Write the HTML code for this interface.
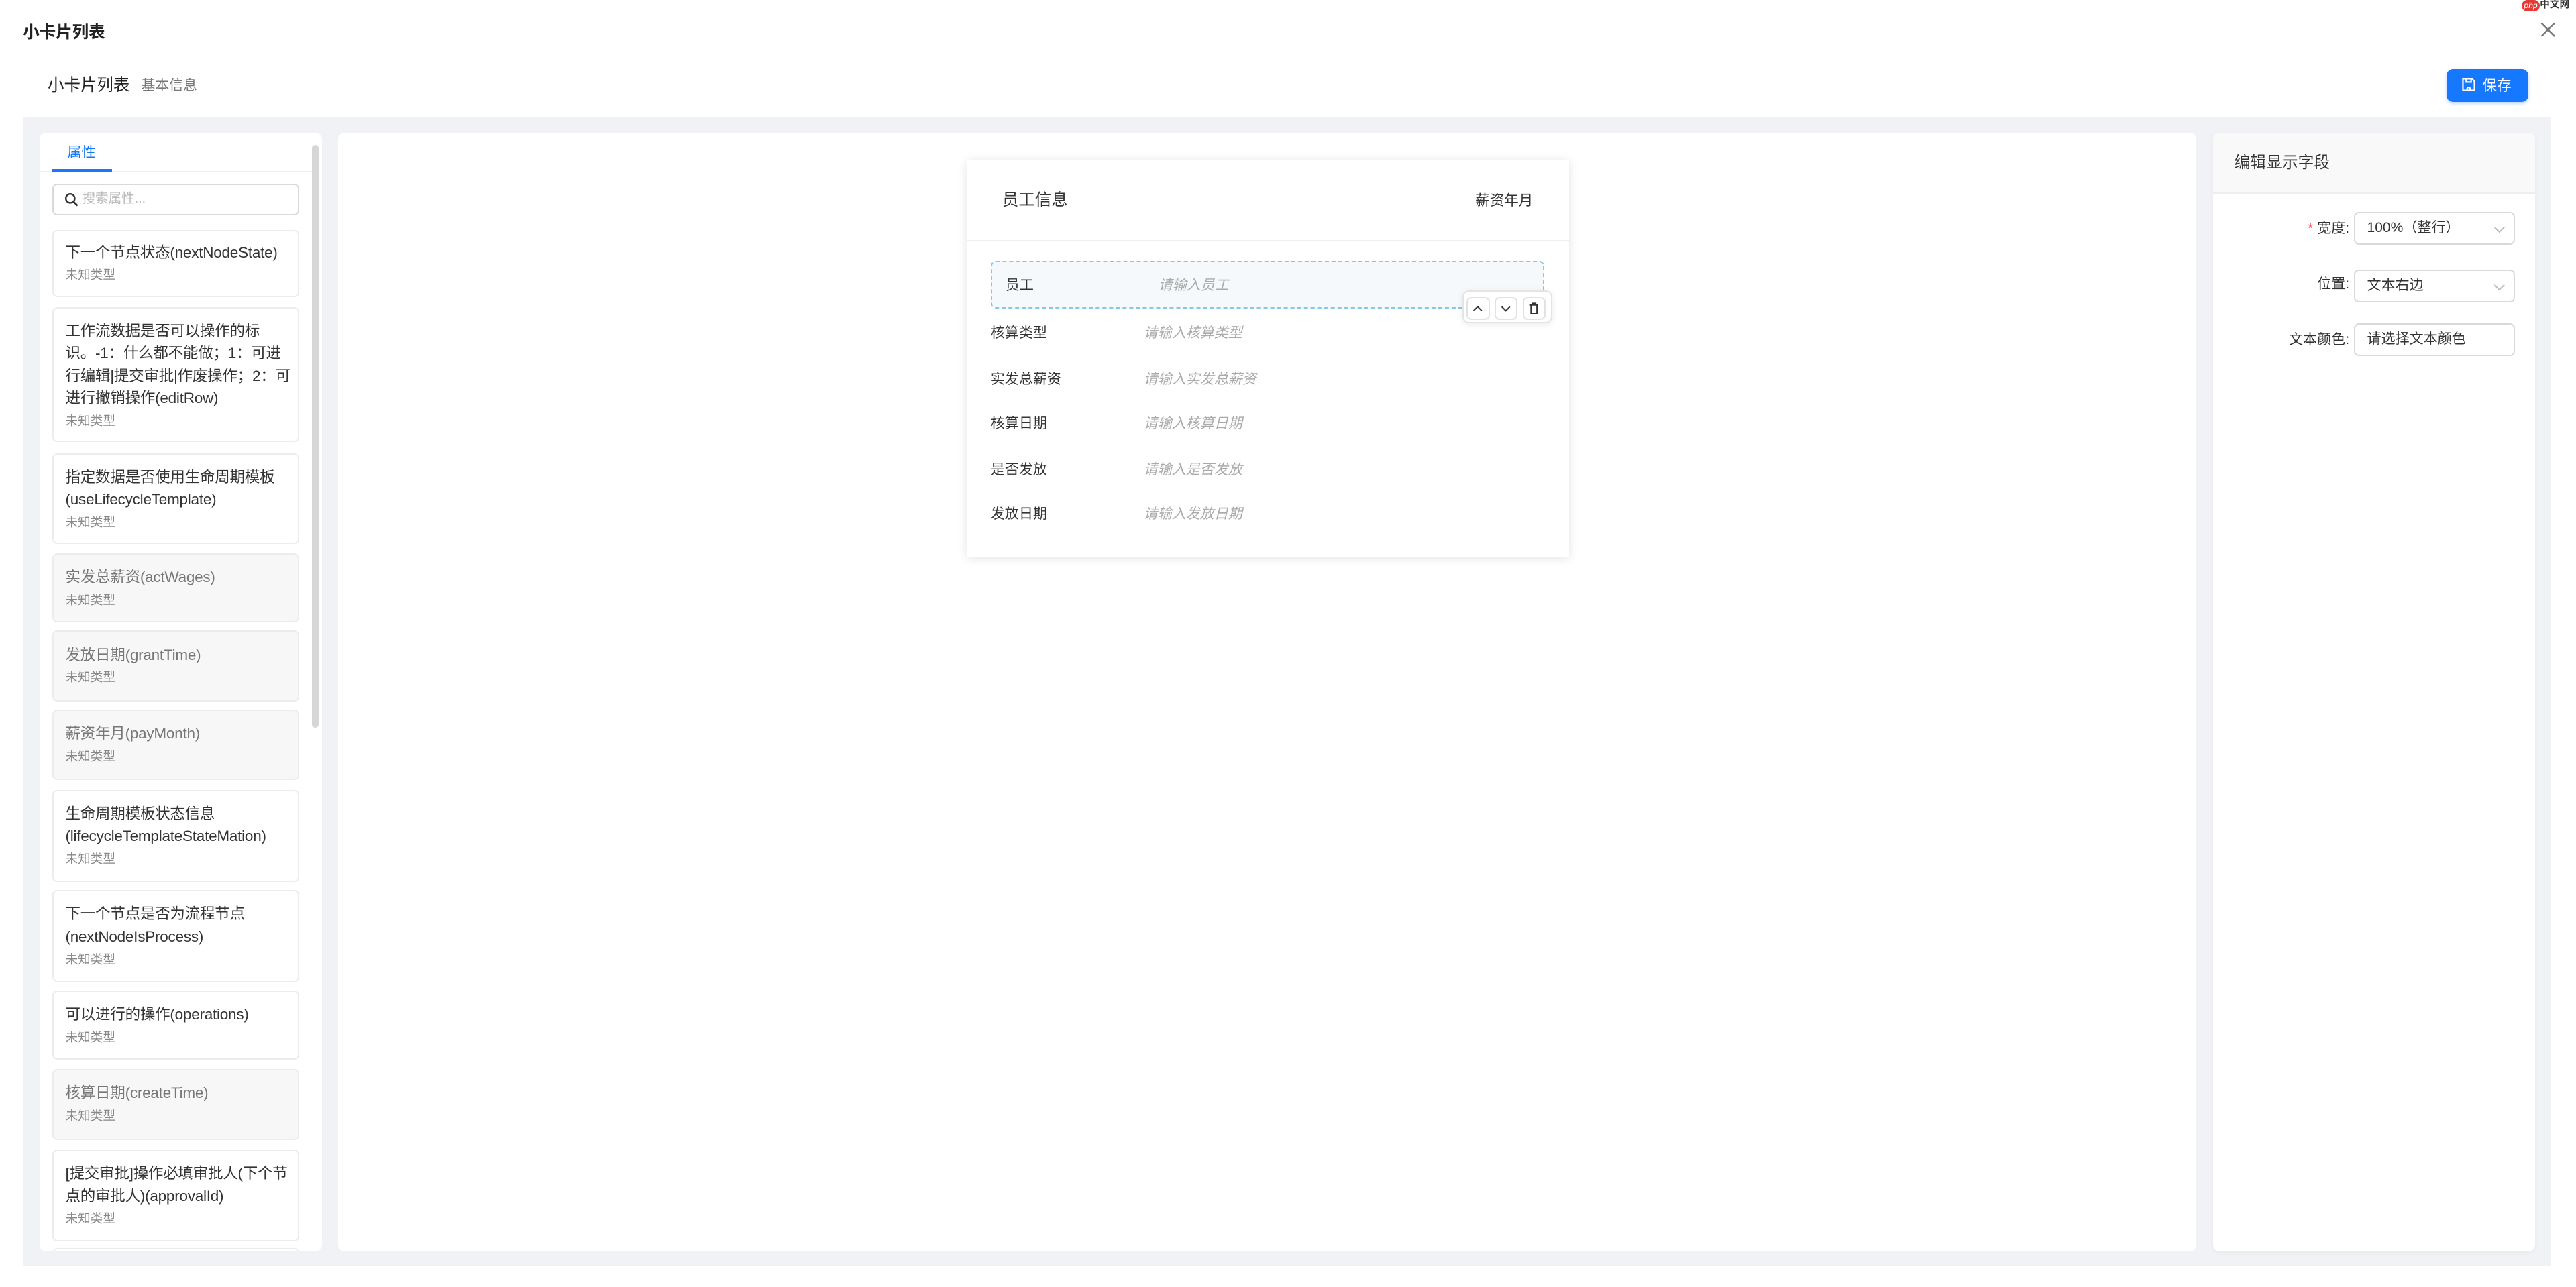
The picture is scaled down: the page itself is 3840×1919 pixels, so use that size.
<!DOCTYPE html>
<html><head><meta charset="utf-8"><style>
html,body{margin:0;padding:0;background:#fff;overflow:hidden}
body{width:3840px;height:1919px}
#r{zoom:2.44898;width:1568px;height:784px;position:relative;font-family:"Liberation Sans","Noto Sans CJK SC",sans-serif;color:#333}
.a{position:absolute}
.t{position:absolute;white-space:nowrap;line-height:12px}
.card{position:absolute;left:32px;width:150px;border:1px solid #ececec;border-radius:3px;background:#fff;box-sizing:border-box;padding:0 4px 0 7px}
.card.g{background:#f7f7f7}
.card .n{font-size:9.2px;line-height:13.6px;color:#333;letter-spacing:-0.1px}
.card.g .n{color:#777}
.card .ty{font-size:7.6px;line-height:12px;color:#888;margin-top:1px}
.lbl{position:absolute;left:603px;font-size:8.6px;line-height:12px;color:#333;white-space:nowrap}
.ph{position:absolute;left:696px;font-size:8.6px;line-height:12px;color:#aaa;font-style:italic;white-space:nowrap}
.btn{position:absolute;top:3px;width:14px;height:14px;border:1px solid #e2e2e2;border-radius:3px;background:#fff;box-sizing:border-box}
.inp{position:absolute;left:1433px;width:98px;height:20px;border:1px solid #d9d9d9;border-radius:3px;box-sizing:border-box;font-size:8.6px;line-height:18px;padding-left:7px;color:#333;white-space:nowrap}
.fl{position:absolute;right:138px;font-size:8.6px;line-height:12px;color:#333;text-align:right;white-space:nowrap}
</style></head><body><div id="r">
<div class="t" style="left:14px;top:14px;font-size:10px;font-weight:bold;color:#222">小卡片列表</div>
<svg class="a" style="left:1546px;top:13px" width="10" height="10" viewBox="0 0 10 10"><path d="M1 1L9 9M9 1L1 9" stroke="#777" stroke-width="1"/></svg>
<div class="a" style="left:1535px;top:0px;width:11px;height:7px;background:#e53935;border-radius:4px;color:#fff;font-size:5px;line-height:7px;text-align:center;font-style:italic">php</div>
<div class="t" style="left:1546px;top:-3px;font-size:6px;color:#333;font-weight:bold">中文网</div>
<div class="t" style="left:29px;top:46px;font-size:10px;color:#222">小卡片列表</div>
<div class="t" style="left:86px;top:46px;font-size:8.5px;color:#777">基本信息</div>
<div class="a" style="left:1489px;top:42px;width:50px;height:20px;background:#1677ff;border-radius:4px;box-shadow:0 1px 2px rgba(22,119,255,.3)"></div>
<svg class="a" style="left:1498px;top:47px" width="9" height="9" viewBox="0 0 9 9"><path d="M1 1h5.5l1.5 1.5V8H1z M3 1v2h3V1 M4.5 6.2a1 1 0 1 0 0.01 0" fill="none" stroke="#fff" stroke-width="0.9"/></svg>
<div class="t" style="left:1511px;top:46px;font-size:8.8px;color:#fff">保存</div>
<div class="a" style="left:14px;top:71px;width:1539px;height:700px;background:#f0f2f5"></div>
<!-- left panel -->
<div class="a" style="left:24px;top:81px;width:172px;height:681px;background:#fff;border-radius:4px"></div>
<div class="a" style="left:190px;top:88px;width:4px;height:355px;background:#d6d6d6;border-radius:2px"></div>
<div class="t" style="left:41px;top:87px;font-size:8.6px;color:#1677ff">属性</div>
<div class="a" style="left:24px;top:104px;width:166px;height:1px;background:#eee"></div>
<div class="a" style="left:32px;top:103px;width:36px;height:2px;background:#1677ff"></div>
<div class="a" style="left:32px;top:112px;width:150px;height:19px;border:1px solid #d9d9d9;border-radius:3px;box-sizing:border-box"></div>
<svg class="a" style="left:39px;top:117px" width="9" height="9" viewBox="0 0 9 9"><circle cx="3.6" cy="3.6" r="2.7" fill="none" stroke="#333" stroke-width="1"/><path d="M5.6 5.6L8 8" stroke="#333" stroke-width="1.1"/></svg>
<div class="t" style="left:50px;top:115px;font-size:8px;color:#bbb">搜索属性...</div>
<div style="position:absolute;left:24px;top:81px;width:166px;height:681px;overflow:hidden">
<div style="position:relative;left:-24px;top:-81px">
<div class="card" style="top:140px;height:41px;padding-top:6px"><div class="n">下一个节点状态(nextNodeState)</div><div class="ty">未知类型</div></div>
<div class="card" style="top:187px;height:82px;padding-top:7px"><div class="n">工作流数据是否可以操作的标识。-1：什么都不能做；1：可进行编辑|提交审批|作废操作；2：可进行撤销操作(editRow)</div><div class="ty">未知类型</div></div>
<div class="card" style="top:276px;height:55px;padding-top:7px"><div class="n">指定数据是否使用生命周期模板(useLifecycleTemplate)</div><div class="ty">未知类型</div></div>
<div class="card g" style="top:337px;height:42px;padding-top:7px"><div class="n">实发总薪资(actWages)</div><div class="ty">未知类型</div></div>
<div class="card g" style="top:384px;height:43px;padding-top:7px"><div class="n">发放日期(grantTime)</div><div class="ty">未知类型</div></div>
<div class="card g" style="top:432px;height:43px;padding-top:7px"><div class="n">薪资年月(payMonth)</div><div class="ty">未知类型</div></div>
<div class="card" style="top:481px;height:56px;padding-top:7px"><div class="n">生命周期模板状态信息<br>(lifecycleTemplateStateMation)</div><div class="ty">未知类型</div></div>
<div class="card" style="top:542px;height:56px;padding-top:7px"><div class="n">下一个节点是否为流程节点<br>(nextNodeIsProcess)</div><div class="ty">未知类型</div></div>
<div class="card" style="top:603px;height:42px;padding-top:7px"><div class="n">可以进行的操作(operations)</div><div class="ty">未知类型</div></div>
<div class="card g" style="top:651px;height:43px;padding-top:7px"><div class="n">核算日期(createTime)</div><div class="ty">未知类型</div></div>
<div class="card" style="top:700px;height:56px;padding-top:7px"><div class="n">[提交审批]操作必填审批人(下个节<br>点的审批人)(approvalId)</div><div class="ty">未知类型</div></div>
<div class="card" style="top:760px;height:40px"></div>
</div></div>
<!-- middle -->
<div class="a" style="left:206px;top:81px;width:1131px;height:681px;background:#fff;border-radius:4px"></div>
<div class="a" style="left:589px;top:97px;width:366px;height:242px;background:#fff;box-shadow:0 1px 6px rgba(0,0,0,.12)"></div>
<div class="t" style="left:610px;top:116px;font-size:10px;color:#333">员工信息</div>
<div class="t" style="left:898px;top:116px;font-size:8.8px;color:#333">薪资年月</div>
<div class="a" style="left:589px;top:146px;width:366px;height:1px;background:#eee"></div>
<div class="a" style="left:603px;top:159px;width:337px;height:29px;border:1px dashed #82c9ea;border-radius:3px;background:#f6f9fb;box-sizing:border-box"></div>
<div class="t" style="left:612px;top:168px;font-size:8.6px">员工</div>
<div class="t" style="left:705px;top:168px;font-size:8.6px;color:#aaa;font-style:italic">请输入员工</div>
<div class="lbl" style="top:197px">核算类型</div><div class="ph" style="top:197px">请输入核算类型</div>
<div class="lbl" style="top:225px">实发总薪资</div><div class="ph" style="top:225px">请输入实发总薪资</div>
<div class="lbl" style="top:252px">核算日期</div><div class="ph" style="top:252px">请输入核算日期</div>
<div class="lbl" style="top:280px">是否发放</div><div class="ph" style="top:280px">请输入是否发放</div>
<div class="lbl" style="top:307px">发放日期</div><div class="ph" style="top:307px">请输入发放日期</div>
<div class="a" style="left:890px;top:177px;width:55px;height:20px;background:#fff;border:1px solid #e4e4e4;border-radius:4px;box-sizing:border-box;box-shadow:0 1px 4px rgba(0,0,0,.08)">
<div class="btn" style="left:2px"><svg width="12" height="12" viewBox="0 0 12 12" style="display:block"><path d="M3.5 7.5L6 5l2.5 2.5" fill="none" stroke="#333" stroke-width="0.8"/></svg></div>
<div class="btn" style="left:19px"><svg width="12" height="12" viewBox="0 0 12 12" style="display:block"><path d="M3.5 5L6 7.5 8.5 5" fill="none" stroke="#333" stroke-width="0.8"/></svg></div>
<div class="btn" style="left:36px"><svg width="12" height="12" viewBox="0 0 12 12" style="display:block"><path d="M3.5 4h5M5 4V3h2v1M4.2 4.3V9h3.6V4.3" fill="none" stroke="#333" stroke-width="0.8"/></svg></div>
</div>
<!-- right -->
<div class="a" style="left:1347px;top:81px;width:196px;height:681px;background:#fff;border-radius:4px;overflow:hidden;box-shadow:0 1px 3px rgba(0,0,0,.04)">
<div style="height:36px;background:#f9f9f9;border-bottom:1px solid #eee"></div></div>
<div class="t" style="left:1360px;top:93px;font-size:9.7px;color:#333">编辑显示字段</div>
<div class="fl" style="top:133px"><span style="color:#ff4d4f">*</span> 宽度:</div>
<div class="inp" style="top:129px">100%（整行）<svg style="position:absolute;right:5px;top:7px" width="8" height="6" viewBox="0 0 8 6"><path d="M1 1.5L4 4.5 7 1.5" fill="none" stroke="#bbb" stroke-width="0.8"/></svg></div>
<div class="fl" style="top:167px">位置:</div>
<div class="inp" style="top:164px">文本右边<svg style="position:absolute;right:5px;top:7px" width="8" height="6" viewBox="0 0 8 6"><path d="M1 1.5L4 4.5 7 1.5" fill="none" stroke="#bbb" stroke-width="0.8"/></svg></div>
<div class="fl" style="top:201px">文本颜色:</div>
<div class="inp" style="top:197px">请选择文本颜色</div>
</div></body></html>
